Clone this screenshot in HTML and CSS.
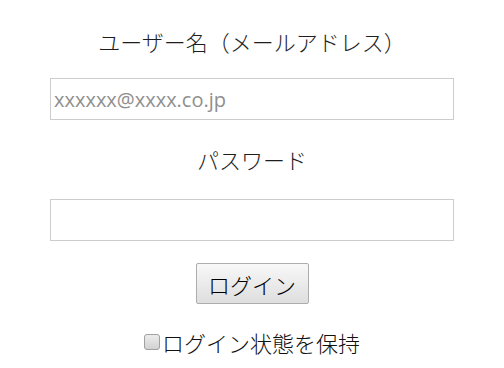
FILE: index.html
```html
<!DOCTYPE html>
<html lang="ja">
<head>
<meta charset="utf-8">
<title>ログイン</title>
<link rel="stylesheet" href="styles.css">
</head>
<body>
<form class="login">
  <label class="field-label" for="user">ユーザー名（メールアドレス）</label>
  <input class="field" id="user" type="text" placeholder="xxxxxx@xxxx.co.jp">
  <label class="field-label second" for="pass">パスワード</label>
  <input class="field" id="pass" type="password">
  <button class="submit" type="button">ログイン</button>
  <label class="remember"><input class="check" type="checkbox">ログイン状態を保持</label>
</form>
</body>
</html>
```
FILE: styles.css
```css
html, body {
  margin: 0;
  background: #ffffff;
}
body {
  font-family: "Noto Sans CJK JP", "Noto Sans", sans-serif;
  font-weight: 300;
  color: #1e1e1e;
}
.login {
  width: 404px;
  margin: 0 auto;
  padding-top: 26px;
  display: flex;
  flex-direction: column;
  align-items: center;
}
.field-label {
  font-size: 22px;
  line-height: 30px;
  height: 30px;
  margin-bottom: 22px;
}
.field-label.second {
  margin-top: 24px;
  margin-bottom: 25px;
}
.field {
  box-sizing: border-box;
  width: 404px;
  height: 42px;
  margin: 0;
  border: 1px solid #cccccc;
  padding: 0 3px;
  font-family: "Open Sans", "Noto Sans", sans-serif;
  font-weight: 400;
  font-size: 20px;
  color: #333333;
  background: #ffffff;
  outline: none;
}
.field::placeholder {
  color: #8f8f8f;
}
.submit {
  box-sizing: border-box;
  margin-top: 22px;
  width: 113px;
  height: 41px;
  padding: 0;
  border: 1px solid #adadad;
  border-radius: 2px;
  background: linear-gradient(#f8f8f8, #dedede);
  font-family: "Noto Sans CJK JP", sans-serif;
  font-weight: 300;
  font-size: 22px;
  line-height: 30px;
  color: #000000;
}
.remember {
  margin-top: 23px;
  display: flex;
  align-items: center;
  font-size: 22px;
  line-height: 30px;
  color: #111111;
}
.check {
  appearance: none;
  -webkit-appearance: none;
  box-sizing: border-box;
  width: 16px;
  height: 16px;
  margin: 0 2px 0 0;
  border: 1px solid #a0a0a0;
  border-radius: 3px;
  background: linear-gradient(#ececec, #d2d2d2);
}
```
